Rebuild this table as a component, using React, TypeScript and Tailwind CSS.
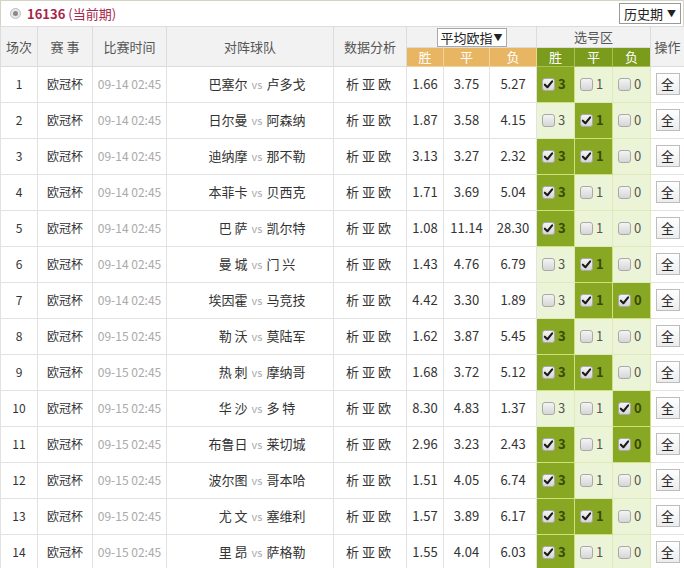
import React from "react";

type Match = {
    no: number;
    date: string;
    home: string;
    away: string;
    odds: [string, string, string];
    picks: [boolean, boolean, boolean];
};

const matches: Match[] = [
    { no: 1, date: "09-14 02:45", home: "巴塞尔", away: "卢多戈", odds: ["1.66", "3.75", "5.27"], picks: [true, false, false] },
    { no: 2, date: "09-14 02:45", home: "日尔曼", away: "阿森纳", odds: ["1.87", "3.58", "4.15"], picks: [false, true, false] },
    { no: 3, date: "09-14 02:45", home: "迪纳摩", away: "那不勒", odds: ["3.13", "3.27", "2.32"], picks: [true, true, false] },
    { no: 4, date: "09-14 02:45", home: "本菲卡", away: "贝西克", odds: ["1.71", "3.69", "5.04"], picks: [true, false, false] },
    { no: 5, date: "09-14 02:45", home: "巴 萨", away: "凯尔特", odds: ["1.08", "11.14", "28.30"], picks: [true, false, false] },
    { no: 6, date: "09-14 02:45", home: "曼 城", away: "门 兴", odds: ["1.43", "4.76", "6.79"], picks: [false, true, false] },
    { no: 7, date: "09-14 02:45", home: "埃因霍", away: "马竞技", odds: ["4.42", "3.30", "1.89"], picks: [false, true, true] },
    { no: 8, date: "09-15 02:45", home: "勒 沃", away: "莫陆军", odds: ["1.62", "3.87", "5.45"], picks: [true, false, false] },
    { no: 9, date: "09-15 02:45", home: "热 刺", away: "摩纳哥", odds: ["1.68", "3.72", "5.12"], picks: [true, true, false] },
    { no: 10, date: "09-15 02:45", home: "华 沙", away: "多 特", odds: ["8.30", "4.83", "1.37"], picks: [false, false, true] },
    { no: 11, date: "09-15 02:45", home: "布鲁日", away: "莱切城", odds: ["2.96", "3.23", "2.43"], picks: [true, false, true] },
    { no: 12, date: "09-15 02:45", home: "波尔图", away: "哥本哈", odds: ["1.51", "4.05", "6.74"], picks: [true, false, false] },
    { no: 13, date: "09-15 02:45", home: "尤 文", away: "塞维利", odds: ["1.57", "3.89", "6.17"], picks: [true, true, false] },
    { no: 14, date: "09-15 02:45", home: "里 昂", away: "萨格勒", odds: ["1.55", "4.04", "6.03"], picks: [true, false, false] },
];

const pickLabels = ["3", "1", "0"];

function Box({ checked }: { checked: boolean }) {
    return (
        <span className="inline-flex h-[13px] w-[13px] items-center justify-center rounded-[3px] border border-[#a9a9a9] bg-gradient-to-b from-[#f4f4f4] to-[#d6d6d6]">
            {checked && (
                <svg viewBox="0 0 12 12" className="h-[11px] w-[11px]">
                    <path d="M2 6.2 L4.8 9 L10 2.6" fill="none" stroke="#1a1a1a" strokeWidth="2.2" strokeLinecap="round" strokeLinejoin="round" />
                </svg>
            )}
        </span>
    );
}

export default function App() {
    const th = "border border-[#dcdcdc] bg-[#f2f2f2] p-0 text-[13px] font-normal text-[#555]";
    const td = "border border-[#e2e2e2] p-0 text-center";
    return (
        <div
            className="w-[684px] h-[568px] overflow-hidden bg-white"
            style={{ fontFamily: '"Noto Sans CJK SC", "Liberation Sans", sans-serif' }}
        >
            {/* title bar */}
            <div className="flex h-[26px] items-center justify-between border border-b-0 border-[#d4d4c4] pl-[9px] pr-[2px]">
                <div className="flex items-center gap-[6px]">
                    <span className="inline-flex h-[11px] w-[11px] items-center justify-center rounded-full border border-[#bbb] bg-[#e8e8e8]">
                        <span className="h-[5px] w-[5px] rounded-full bg-[#888]" />
                    </span>
                    <span className="text-[13px] text-[#a8264a]">
                        <span className="font-bold">16136</span> (当前期)
                    </span>
                </div>
                <div className="flex h-[21px] w-[62px] items-center justify-between border border-[#9a9a9a] bg-white px-[4px] text-[13px] text-[#222]">
                    <span>历史期</span>
                    <span className="text-[9px]">▼</span>
                </div>
            </div>

            <table className="w-[684px] table-fixed border-collapse">
                <colgroup>
                    <col className="w-[37px]" />
                    <col className="w-[55px]" />
                    <col className="w-[74px]" />
                    <col className="w-[167px]" />
                    <col className="w-[73px]" />
                    <col className="w-[37px]" />
                    <col className="w-[46px]" />
                    <col className="w-[47px]" />
                    <col className="w-[38px]" />
                    <col className="w-[38px]" />
                    <col className="w-[38px]" />
                    <col className="w-[34px]" />
                </colgroup>
                <thead>
                    <tr className="h-[20px]">
                        <th rowSpan={2} className={th}>场次</th>
                        <th rowSpan={2} className={th}>赛 事</th>
                        <th rowSpan={2} className={th}>比赛时间</th>
                        <th rowSpan={2} className={th}>对阵球队</th>
                        <th rowSpan={2} className={th}>数据分析</th>
                        <th colSpan={3} className={th + " align-bottom"}>
                            <div className="mx-auto flex h-[19px] w-[70px] items-center justify-between border border-[#a8a8a8] bg-white px-[3px] text-[13px] leading-none text-[#222]">
                                <span>平均欧指</span>
                                <span className="text-[9px]">▼</span>
                            </div>
                        </th>
                        <th colSpan={3} className={th}>选号区</th>
                        <th rowSpan={2} className={th}>操作</th>
                    </tr>
                    <tr className="h-[19px]">
                        {["胜", "平", "负"].map((t) => (
                            <th key={"o" + t} className="border border-[#f0d29c] bg-[#e8b662] p-0 text-[13px] font-normal leading-none text-white">
                                {t}
                            </th>
                        ))}
                        {["胜", "平", "负"].map((t) => (
                            <th key={"p" + t} className="border border-[#a6c052] bg-[#7b9b1d] p-0 text-[13px] font-normal leading-none text-white">
                                {t}
                            </th>
                        ))}
                    </tr>
                </thead>
                <tbody>
                    {matches.map((m) => (
                        <tr key={m.no} className="h-[36px] text-[12px] text-[#333]">
                            <td className={td}>{m.no}</td>
                            <td className={td}>欧冠杯</td>
                            <td className={td + " text-[#a9a9a9]"}>{m.date}</td>
                            <td className={td}>
                                <div className="flex items-center pl-[14px] text-[13px]">
                                    <span className="flex-1 text-right">{m.home}</span>
                                    <span className="px-[4px] text-[11px] text-[#aaa]">vs</span>
                                    <span className="flex-1 text-left">{m.away}</span>
                                </div>
                            </td>
                            <td className={td + " text-[13px] tracking-[3px]"}>析亚欧</td>
                            {m.odds.map((o, i) => (
                                <td key={i} className={td + " text-[13px]"}>{o}</td>
                            ))}
                            {m.picks.map((p, i) =>
                                p ? (
                                    <td key={"k" + i} className="border border-[#cfe37a] bg-[#88a824] p-0 pl-[5px] text-[13px] font-bold text-[#3a4a06]">
                                        <div className="flex items-center gap-[3px]">
                                            <Box checked />
                                            <span>{pickLabels[i]}</span>
                                        </div>
                                    </td>
                                ) : (
                                    <td key={"k" + i} className="border border-[#dfeabc] bg-[#ecf4d8] p-0 pl-[5px] text-[13px] text-[#555]">
                                        <div className="flex items-center gap-[3px]">
                                            <Box checked={false} />
                                            <span>{pickLabels[i]}</span>
                                        </div>
                                    </td>
                                )
                            )}
                            <td className={td}>
                                <span className="inline-flex h-[22px] w-[24px] items-center justify-center border border-[#bdbdbd] bg-gradient-to-b from-white to-[#ececec] text-[13px] text-[#222]">
                                    全
                                </span>
                            </td>
                        </tr>
                    ))}
                </tbody>
            </table>
        </div>
    );
}
